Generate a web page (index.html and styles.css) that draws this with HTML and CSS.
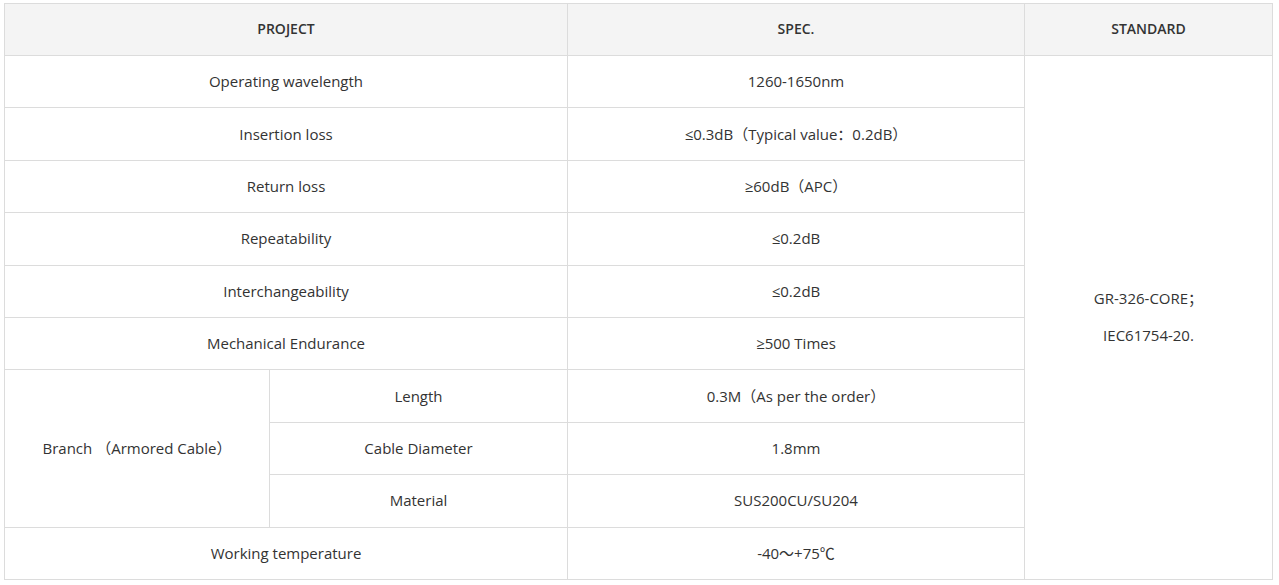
FILE: index.html
```html
<!DOCTYPE html>
<html>
<head>
<meta charset="utf-8">
<link rel="stylesheet" href="styles.css">
</head>
<body>
<table class="spec">
  <colgroup>
    <col class="c1"><col class="c2"><col class="c3"><col class="c4">
  </colgroup>
  <thead>
    <tr><th colspan="2">PROJECT</th><th>SPEC.</th><th>STANDARD</th></tr>
  </thead>
  <tbody>
    <tr><td colspan="2">Operating wavelength</td><td>1260-1650nm</td>
      <td rowspan="10" class="std"><p>GR-326-CORE；</p><p>IEC61754-20.</p></td></tr>
    <tr><td colspan="2">Insertion loss</td><td>≤0.3dB（Typical value：0.2dB）</td></tr>
    <tr><td colspan="2">Return loss</td><td>≥60dB（APC）</td></tr>
    <tr><td colspan="2">Repeatability</td><td>≤0.2dB</td></tr>
    <tr><td colspan="2">Interchangeability</td><td>≤0.2dB</td></tr>
    <tr><td colspan="2">Mechanical Endurance</td><td>≥500 Times</td></tr>
    <tr><td rowspan="3">Branch （Armored Cable）</td><td>Length</td><td>0.3M（As per the order）</td></tr>
    <tr><td>Cable Diameter</td><td>1.8mm</td></tr>
    <tr><td>Material</td><td>SUS200CU/SU204</td></tr>
    <tr><td colspan="2">Working temperature</td><td>-40～+75℃</td></tr>
  </tbody>
</table>
</body>
</html>
```
FILE: styles.css
```css
html, body {
  margin: 0;
  padding: 0;
  background: #fff;
}
body {
  padding: 3px 0 0 4px;
  font-family: "Open Sans", "Noto Sans CJK SC", sans-serif;
  color: #333;
}
.spec {
  border-collapse: collapse;
  table-layout: fixed;
  width: 1268px;
  font-size: 15px;
}
.c1 { width: 265px; }
.c2 { width: 298px; }
.c3 { width: 457px; }
.c4 { width: 248px; }
.spec th, .spec td {
  border: 1px solid #dcdcdc;
  text-align: center;
  vertical-align: middle;
  padding: 0 8px;
  line-height: 20px;
}
.spec td {
  padding-bottom: 1px;
}
.spec th {
  height: 49px;
  background: #f4f4f4;
  font-size: 14px;
  font-weight: 600;
  color: #333;
  padding-bottom: 2px;
}
.spec tbody tr {
  height: 52.4px;
}
.std p {
  margin: 0;
  line-height: 24px;
}
.std p + p {
  margin-top: 13px;
}
```
